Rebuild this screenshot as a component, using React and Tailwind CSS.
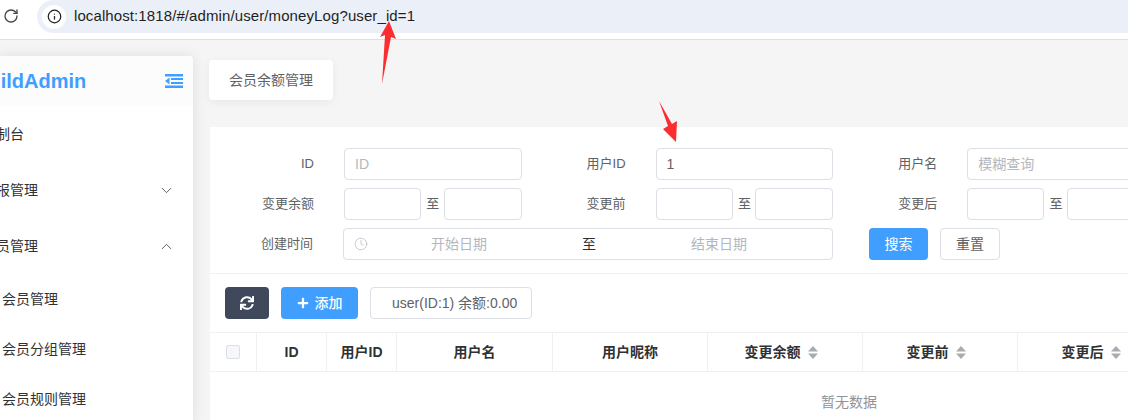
import React from 'react';
import { RotateCw, Info, ChevronDown, ChevronUp, Clock } from 'lucide-react';
import { FaSync, FaPlus } from 'react-icons/fa';

const FONT = { fontFamily: '"Liberation Sans", "Noto Sans CJK SC", sans-serif' };

/* ---- sidebar ---- */
function MenuIcon() {
  return (
    <svg width="18" height="14" viewBox="0 0 18 14" fill="#409eff">
      <rect x="0" y="0" width="18" height="2.5" />
      <rect x="6" y="4" width="12" height="2" />
      <rect x="6" y="8" width="12" height="2" />
      <rect x="0" y="11.5" width="18" height="2.5" />
      <polygon points="0,7 4.5,3.6 4.5,10.4" />
    </svg>
  );
}

function Sidebar() {
  return (
    <aside className="w-[193px] mt-[16px] shrink-0 bg-white rounded-tr shadow-[0_0_14px_rgba(0,0,0,0.1)] overflow-hidden">
      <div className="h-[50px] bg-[#fcfcfc] flex items-center justify-between pr-[10px]">
        <span className="ml-[-26px] text-[20px] font-bold text-[#409eff] whitespace-nowrap">BuildAdmin</span>
        <MenuIcon />
      </div>
      <div className="text-[14px] text-[#303133]">
        <div className="h-[56px] flex items-center"><span className="ml-[-18px] whitespace-nowrap">控制台</span></div>
        <div className="h-[56px] flex items-center justify-between pr-[18px]">
          <span className="ml-[-18px] whitespace-nowrap">常报管理</span>
          <ChevronDown size={17} strokeWidth={1.1} color="#303133" />
        </div>
        <div className="h-[56px] flex items-center justify-between pr-[18px]">
          <span className="ml-[-18px] whitespace-nowrap">会员管理</span>
          <ChevronUp size={17} strokeWidth={1.1} color="#303133" />
        </div>
        <div className="h-[50px] flex items-center pl-[2px]">会员管理</div>
        <div className="h-[50px] flex items-center pl-[2px]">会员分组管理</div>
        <div className="h-[50px] flex items-center pl-[2px]">会员规则管理</div>
      </div>
    </aside>
  );
}

/* ---- search form ---- */
function Field({ label, children }) {
  return (
    <div className="flex items-center">
      <div className="w-[104px] text-right text-[13px] text-[#606266] shrink-0">{label}</div>
      <div className="ml-[30px] w-[177.6px] shrink-0">{children}</div>
    </div>
  );
}

function Input({ placeholder, value, className = 'w-full' }) {
  return (
    <div className={`h-[32px] border border-[#dcdfe6] rounded bg-white flex items-center px-[10px] text-[14px] ${className}`}>
      {value ? <span className="text-[#606266]">{value}</span> : <span className="text-[#b4b7bd]">{placeholder}</span>}
    </div>
  );
}

function Range() {
  return (
    <div className="flex items-center justify-between">
      <Input className="w-[77px]" />
      <span className="text-[13px] text-[#606266] ml-[1px]">至</span>
      <Input className="w-[78px]" />
    </div>
  );
}

function SearchForm() {
  return (
    <div className="h-[147px] pt-[21px] border-b border-[#f0f0f0] overflow-hidden">
      <div className="flex w-[1000px]">
        <Field label="ID"><Input placeholder="ID" /></Field>
        <Field label="用户ID"><Input value="1" /></Field>
        <Field label="用户名"><Input placeholder="模糊查询" /></Field>
      </div>
      <div className="flex w-[1000px] mt-[8px]">
        <Field label="变更余额"><Range /></Field>
        <Field label="变更前"><Range /></Field>
        <Field label="变更后"><Range /></Field>
      </div>
      <div className="flex items-center mt-[8px]">
        <div className="w-[103px] text-right text-[13px] text-[#606266]">创建时间</div>
        <div className="ml-[30px] w-[490px] h-[32px] border border-[#dcdfe6] rounded flex items-center text-[14px] text-[#b4b7bd]">
          <Clock size={14} strokeWidth={1} color="#a8abb2" className="ml-[10px]" />
          <span className="ml-[63px] w-[56px]">开始日期</span>
          <span className="ml-[95px] text-[#303133]">至</span>
          <span className="ml-[95px]">结束日期</span>
        </div>
        <button className="ml-[36px] w-[59px] h-[32px] rounded bg-[#409eff] text-white text-[14px]">搜索</button>
        <button className="ml-[12px] w-[60px] h-[32px] rounded border border-[#dcdfe6] text-[14px] text-[#606266]">重置</button>
      </div>
    </div>
  );
}

/* ---- table ---- */
function Sort() {
  return (
    <svg width="10" height="13" viewBox="0 0 10 13" fill="#a8abb2" className="ml-[7px] mr-[8px]">
      <polygon points="5,0 10,5.5 0,5.5" />
      <polygon points="5,13 10,7.5 0,7.5" />
    </svg>
  );
}

const columns = [
  { title: 'ID', w: 'w-[70px]' },
  { title: '用户ID', w: 'w-[70px]' },
  { title: '用户名', w: 'w-[156px]' },
  { title: '用户昵称', w: 'w-[155px]' },
  { title: '变更余额', w: 'w-[155px]', sort: true },
  { title: '变更前', w: 'w-[155px]', sort: true },
  { title: '变更后', w: 'w-[155px]', sort: true },
];

function Table() {
  return (
    <div>
      <div className="flex h-[40px] border-y border-[#f0f0f0] text-[14px] font-bold text-[#303133]">
        <div className="w-[47px] shrink-0 border-r border-[#f0f0f0] flex items-center pl-[16px]">
          <div className="w-[14px] h-[14px] border border-[#dcdfe6] bg-[#f5f7fa] rounded-[2px]" />
        </div>
        {columns.map((c) => (
          <div key={c.title} className={`${c.w} shrink-0 border-r border-[#f0f0f0] flex items-center justify-center`}>
            {c.title}
            {c.sort && <Sort />}
          </div>
        ))}
      </div>
      <div className="h-[60px] flex items-center justify-center text-[14px] text-[#909399] w-[1278px]">暂无数据</div>
    </div>
  );
}

/* ---- page ---- */
export default function App() {
  return (
    <div className="relative w-[1128px] h-[420px] overflow-hidden bg-[#f5f5f5]" style={FONT}>
      {/* browser bar */}
      <div className="h-[40px] bg-white border-b border-[#dfdfdf] flex items-start">
        <RotateCw size={16} strokeWidth={2} color="#474747" className="ml-[3px] mt-[8px]" />
        <div className="ml-[18px] flex-1 h-[33px] bg-[#ebf0f8] rounded-l-full flex items-center pl-[5px]">
          <div className="w-[24px] h-[24px] bg-white rounded-full flex items-center justify-center">
            <Info size={15} strokeWidth={2} color="#1f1f1f" />
          </div>
          <span className="ml-[8px] text-[15px] tracking-[0.1px] text-[#1f1f1f]">localhost:1818/#/admin/user/moneyLog?user_id=1</span>
        </div>
      </div>

      <div className="flex">
        <Sidebar />
        <main className="ml-[16px] flex-1 min-w-0">
          <div className="mt-[20px] w-[124px] h-[40px] bg-white rounded shadow-[0_2px_8px_rgba(0,0,0,0.06)] flex items-center justify-center text-[14px] text-[#606266]">
            会员余额管理
          </div>
          <div className="mt-[27px] ml-[1px] bg-white h-[293px] overflow-hidden">
            <SearchForm />
            <div className="h-[58px] flex items-center pl-[15px]">
              <button className="w-[44px] h-[32px] rounded bg-[#40485b] flex items-center justify-center">
                <FaSync size={14} color="#fff" />
              </button>
              <button className="ml-[12px] w-[77px] h-[32px] rounded bg-[#409eff] text-white text-[14px] font-medium flex items-center justify-center gap-[6px]">
                <FaPlus size={12} />添加
              </button>
              <div className="ml-[12px] w-[162px] h-[32px] border border-[#dcdfe6] rounded flex items-center pl-[21px] text-[14px] text-[#606266] whitespace-nowrap">
                user(ID:1) 余额:0.00
              </div>
            </div>
            <Table />
          </div>
        </main>
      </div>

      {/* red annotation arrows */}
      <svg className="absolute left-0 top-0" width="1128" height="420" fill="#fb2d30">
        <polygon points="389,21 396,39 391,37 382,84 385,35 380,37" />
        <polygon points="659,101 672,124 677,121 676,142 663,129 668,126" />
      </svg>
    </div>
  );
}
